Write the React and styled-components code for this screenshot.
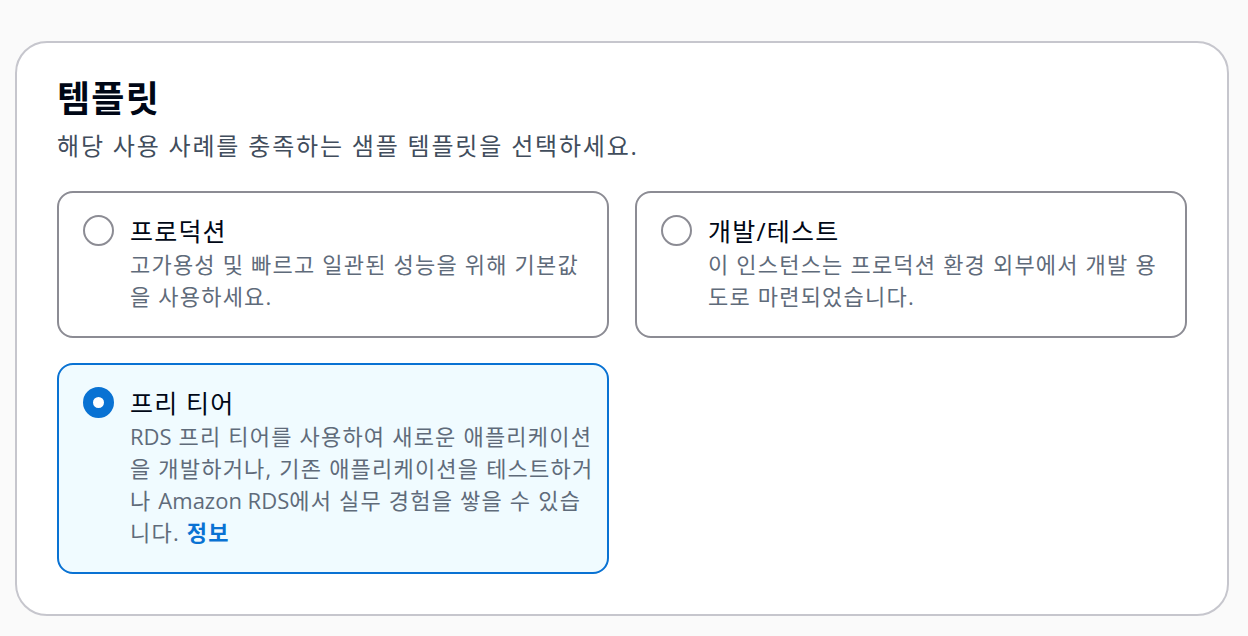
import styled, { createGlobalStyle } from "styled-components";

const GlobalStyle = createGlobalStyle`
  html, body {
    margin: 0;
    padding: 0;
    background: #fafafa;
  }
  body {
    font-family: "Open Sans", "Noto Sans CJK KR", sans-serif;
  }
`;

const Page = styled.div`
  padding: 41px 19px 20px 15px;
`;

const Card = styled.section`
  background: #ffffff;
  border: 2px solid #c6c6cd;
  border-radius: 32px;
  padding: 34px 40px 40px 40px;
`;

const Title = styled.h2`
  margin: 0;
  font-size: 36px;
  line-height: 44px;
  letter-spacing: 1.2px;
  font-weight: 700;
  color: #000716;
`;

const Subtitle = styled.p`
  margin: 9px 0 0 0;
  font-size: 24px;
  line-height: 32px;
  letter-spacing: 1.8px;
  color: #414d5c;
`;

const Grid = styled.div`
  display: grid;
  grid-template-columns: 1fr 1fr;
  gap: 25px 26px;
  margin-top: 29px;
`;

const Tile = styled.label`
  display: flex;
  gap: 16px;
  align-items: flex-start;
  padding: 22px 10px 24px 24px;
  border: 2px solid ${(p) => (p.$selected ? "#0972d3" : "#8c8c94")};
  background: ${(p) => (p.$selected ? "#f0fbff" : "#ffffff")};
  border-radius: 16px;
`;

const Radio = styled.span`
  flex: none;
  box-sizing: border-box;
  width: 31px;
  height: 31px;
  border-radius: 50%;
  border: ${(p) => (p.$checked ? "10px solid #0972d3" : "2px solid #8c8c94")};
  background: #ffffff;
`;

const Body = styled.div`
  display: flex;
  flex-direction: column;
`;

const Label = styled.div`
  font-size: 25px;
  line-height: 32px;
  letter-spacing: 1.2px;
  color: #000716;
`;

const Desc = styled.div`
  margin-top: 1px;
  font-size: 22px;
  line-height: 32px;
  letter-spacing: 1.2px;
  color: #5f6b7a;
`;

const Latin = styled.span`
  letter-spacing: 0;
`;

const Info = styled.a`
  color: #0972d3;
  font-weight: 700;
  text-decoration: none;
`;

const options = [
  {
    id: "prod",
    label: "프로덕션",
    desc: "고가용성 및 빠르고 일관된 성능을 위해 기본값을 사용하세요.",
  },
  {
    id: "dev",
    label: "개발/테스트",
    desc: "이 인스턴스는 프로덕션 환경 외부에서 개발 용도로 마련되었습니다.",
  },
  {
    id: "free",
    label: "프리 티어",
    desc: (
      <>
        <Latin>RDS</Latin> 프리 티어를 사용하여 새로운 애플리케이션을 개발하거나, 기존
        애플리케이션을 테스트하거나 <Latin>Amazon RDS</Latin>에서 실무 경험을 쌓을 수
        있습니다.
      </>
    ),
    info: true,
  },
];

const App = () => {
  const selected = "free";
  return (
    <Page>
      <GlobalStyle />
      <Card>
        <Title>템플릿</Title>
        <Subtitle>해당 사용 사례를 충족하는 샘플 템플릿을 선택하세요.</Subtitle>
        <Grid>
          {options.map((o) => (
            <div key={o.id}>
              <Tile $selected={o.id === selected}>
                <Radio $checked={o.id === selected} />
                <Body>
                  <Label>{o.label}</Label>
                  <Desc>
                    {o.desc}
                    {o.info && (
                      <>
                        {" "}
                        <Info href="#">정보</Info>
                      </>
                    )}
                  </Desc>
                </Body>
              </Tile>
            </div>
          ))}
        </Grid>
      </Card>
    </Page>
  );
};

export default App;
